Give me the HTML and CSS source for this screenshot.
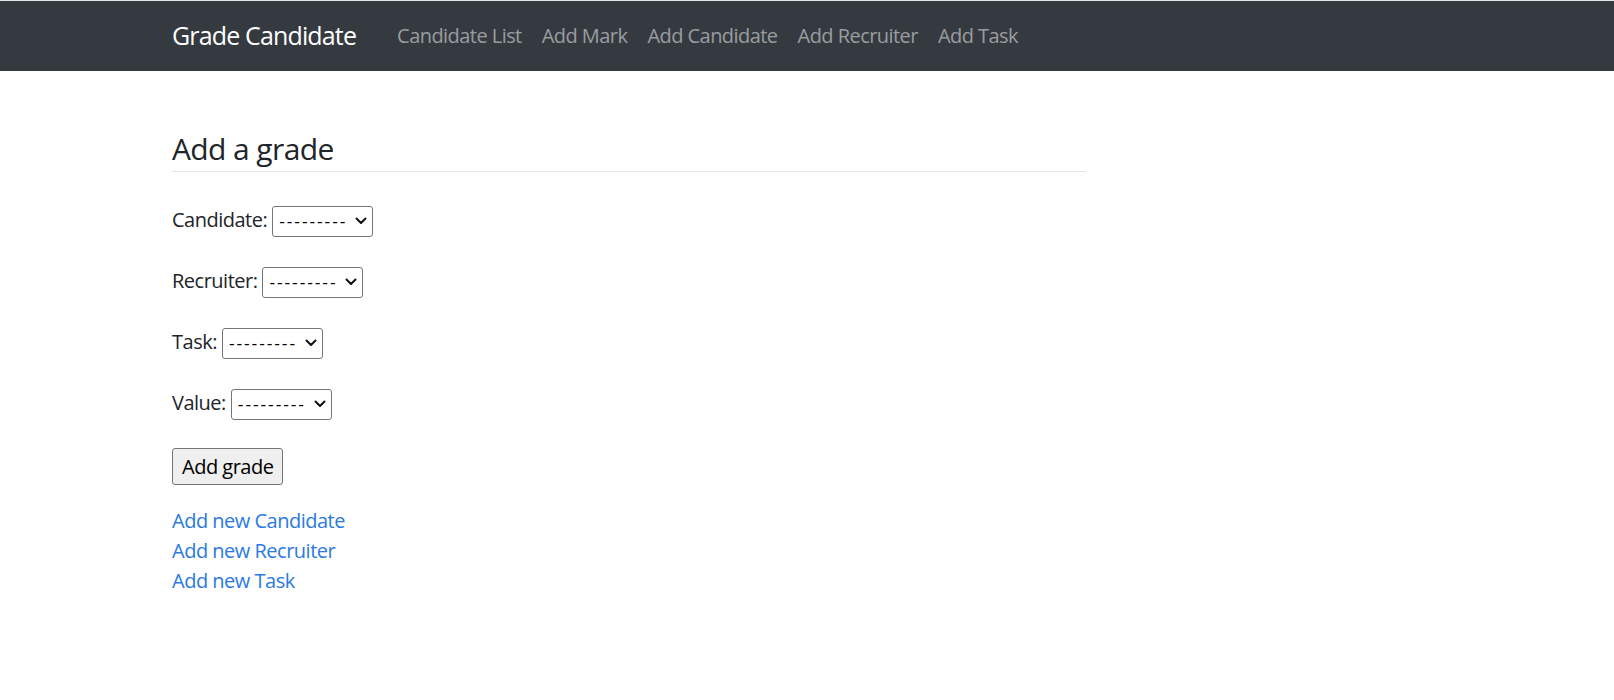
FILE: index.html
```html
<!DOCTYPE html>
<html lang="en">
<head>
<meta charset="utf-8">
<title>Grade Candidate</title>
<link rel="stylesheet" href="styles.css">
</head>
<body>
<nav class="navbar">
  <div class="container nav-inner">
    <a class="brand" href="#">Grade Candidate</a>
    <ul class="nav-links">
      <li><a href="#">Candidate List</a></li>
      <li><a href="#">Add Mark</a></li>
      <li><a href="#">Add Candidate</a></li>
      <li><a href="#">Add Recruiter</a></li>
      <li><a href="#">Add Task</a></li>
    </ul>
  </div>
</nav>
<main class="container">
  <div class="content">
    <h4 class="title">Add a grade</h4>
    <form class="grade-form">
      <p class="field"><label>Candidate:</label>
        <span class="select-wrap"><select><option>---------</option></select><svg class="chev" viewBox="0 0 12 8" width="12" height="8"><path d="M1.5 1.5 L6 6 L10.5 1.5" fill="none" stroke="#111" stroke-width="2" stroke-linecap="round" stroke-linejoin="round"/></svg></span></p>
      <p class="field"><label>Recruiter:</label>
        <span class="select-wrap"><select><option>---------</option></select><svg class="chev" viewBox="0 0 12 8" width="12" height="8"><path d="M1.5 1.5 L6 6 L10.5 1.5" fill="none" stroke="#111" stroke-width="2" stroke-linecap="round" stroke-linejoin="round"/></svg></span></p>
      <p class="field"><label>Task:</label>
        <span class="select-wrap"><select><option>---------</option></select><svg class="chev" viewBox="0 0 12 8" width="12" height="8"><path d="M1.5 1.5 L6 6 L10.5 1.5" fill="none" stroke="#111" stroke-width="2" stroke-linecap="round" stroke-linejoin="round"/></svg></span></p>
      <p class="field"><label>Value:</label>
        <span class="select-wrap"><select><option>---------</option></select><svg class="chev" viewBox="0 0 12 8" width="12" height="8"><path d="M1.5 1.5 L6 6 L10.5 1.5" fill="none" stroke="#111" stroke-width="2" stroke-linecap="round" stroke-linejoin="round"/></svg></span></p>
      <button type="button" class="btn">Add grade</button>
    </form>
    <div class="links">
      <a href="#">Add new Candidate</a>
      <a href="#">Add new Recruiter</a>
      <a href="#">Add new Task</a>
    </div>
  </div>
</main>
</body>
</html>
```
FILE: styles.css
```css
* { box-sizing: border-box; }
html, body { margin: 0; padding: 0; }
body {
  font-family: "Open Sans", "Noto Sans", "Liberation Sans", sans-serif;
  font-size: 20px;
  line-height: 1.5;
  letter-spacing: -0.5px;
  color: #212529;
  background: #fff;
  border-top: 1px solid #e4e6e8;
}
.container {
  max-width: 1270px;
  margin: 0 auto;
}
.navbar {
  background: #343a40;
  height: 70px;
}
.nav-inner {
  display: flex;
  align-items: center;
  height: 100%;
}
.brand {
  color: #fff;
  text-decoration: none;
  font-size: 25px;
  line-height: 1.5;
  letter-spacing: -0.85px;
  margin-right: 31px;
}
.nav-links {
  display: flex;
  list-style: none;
  margin: 0;
  padding: 0;
}
.nav-links a {
  display: block;
  padding: 10px 10px;
  color: rgba(255,255,255,.5);
  text-decoration: none;
  font-size: 20px;
  letter-spacing: -0.55px;
}
.content {
  width: 914px;
  padding-top: 60px;
}
.title {
  font-size: 30px;
  font-weight: 400;
  line-height: 1.2;
  letter-spacing: -0.6px;
  margin: 0 0 30px;
  padding-bottom: 4px;
  border-bottom: 1px solid rgba(0,0,0,.1);
}
.grade-form { margin: 0; }
.field {
  margin: 0 0 25px;
  height: 36px;
  display: flex;
  align-items: center;
  gap: 5px;
}
.select-wrap {
  position: relative;
  display: inline-block;
  width: 101px;
  height: 31px;
}
.select-wrap select {
  appearance: none;
  -webkit-appearance: none;
  font-family: "Liberation Sans", Arial, sans-serif;
  font-size: 17px;
  font-weight: 400;
  letter-spacing: 1.9px;
  height: 31px;
  width: 101px;
  border: 1px solid #767676;
  border-radius: 3px;
  background: #fff;
  color: #000;
  padding: 0 0 0 6px;
  margin: 0;
}
.chev {
  position: absolute;
  right: 6px;
  top: 12px;
  pointer-events: none;
}
.btn {
  font-family: inherit;
  font-size: 20px;
  line-height: 1.5;
  letter-spacing: -0.5px;
  height: 37px;
  padding: 0 9px;
  background: #efefef;
  border: 1px solid #767676;
  border-radius: 3px;
  color: #000;
  margin-top: 2px;
}
.links {
  display: flex;
  flex-direction: column;
  align-items: flex-start;
  margin-top: 21px;
}
.links a {
  color: #2a7ae2;
  text-decoration: none;
  line-height: 30px;
}
```
